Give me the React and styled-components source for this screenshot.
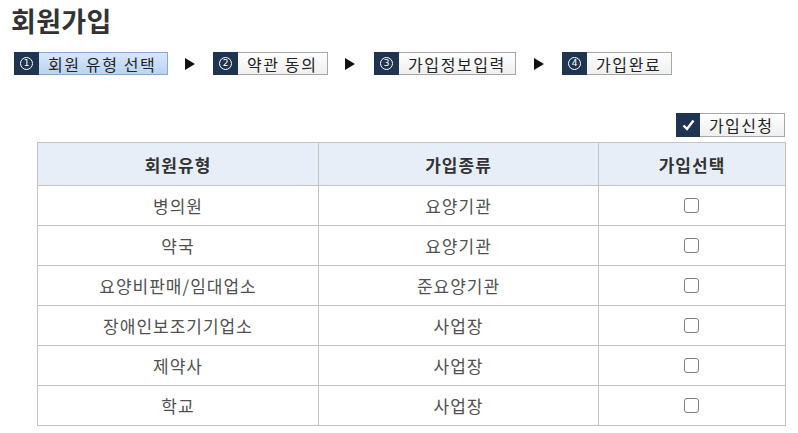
import React from "react";
import styled, { createGlobalStyle } from "styled-components";

const GlobalStyle = createGlobalStyle`
  html, body {
    margin: 0;
    padding: 0;
    background: #ffffff;
  }
  body {
    font-family: "Noto Sans CJK KR", "Noto Sans", sans-serif;
    color: #444;
  }
`;

const Page = styled.div`
  width: 798px;
  height: 433px;
  overflow: hidden;
  padding: 3px 0 0 11px;
  box-sizing: border-box;
`;

const Title = styled.h1`
  margin: 0;
  font-size: 27px;
  font-weight: 700;
  color: #333;
  line-height: 36px;
  letter-spacing: 0.3px;
`;

const Steps = styled.div`
  display: flex;
  align-items: center;
  margin: 13px 0 0 3px;
  height: 23px;
`;

const Step = styled.div`
  display: flex;
  height: 23px;
  box-sizing: border-box;
  border: 1px solid ${(p) => (p.$active ? "#8aa9cf" : "#a8a8a8")};
  border-left: none;
`;

const StepNum = styled.span`
  width: 25px;
  background: #1e3450;
  display: flex;
  align-items: center;
  justify-content: center;
  margin: -1px 0;
`;

const Circle = styled.span`
  width: 11px;
  height: 11px;
  border: 1.2px solid #fff;
  border-radius: 50%;
  color: #fff;
  font-family: "DejaVu Sans", sans-serif;
  font-size: 9px;
  line-height: 11px;
  text-align: center;
`;

const StepLabel = styled.span`
  display: flex;
  align-items: center;
  box-sizing: border-box;
  width: ${(p) => p.$w}px;
  padding-left: 9px;
  font-size: 16px;
  color: #222;
  letter-spacing: 1.6px;
  white-space: nowrap;
  background: ${(p) =>
    p.$active
      ? "linear-gradient(#d9e8fa, #b9d3f1)"
      : "linear-gradient(#ffffff, #efefef)"};
`;

const Arrow = styled.span`
  width: 0;
  height: 0;
  border-top: 6px solid transparent;
  border-bottom: 6px solid transparent;
  border-left: 10px solid #111;
  margin: 0 ${(p) => p.$right}px 0 ${(p) => p.$left}px;
`;

const ActionRow = styled.div`
  display: flex;
  justify-content: flex-end;
  width: 774px;
  margin-top: 38px;
`;

const ApplyButton = styled.button`
  display: flex;
  height: 24px;
  padding: 0;
  box-sizing: border-box;
  border: 1px solid #a8a8a8;
  border-left: none;
  background: linear-gradient(#ffffff, #efefef);
  cursor: pointer;
  font-family: inherit;
`;

const ApplyIcon = styled.span`
  width: 24px;
  margin: -1px 0;
  background: #1e3450;
  display: flex;
  align-items: center;
  justify-content: center;
`;

const ApplyText = styled.span`
  display: flex;
  align-items: center;
  box-sizing: border-box;
  width: 84px;
  padding-left: 9px;
  font-size: 16px;
  letter-spacing: 1.4px;
  color: #222;
`;

const Table = styled.table`
  margin: 5px 0 0 26px;
  width: 748px;
  border-collapse: collapse;
  table-layout: fixed;
`;

const Th = styled.th`
  height: 42px;
  background: #e8eef7;
  border: 1px solid #c3c3c3;
  font-size: 17px;
  font-weight: 700;
  letter-spacing: 1px;
  color: #333;
  padding: 0;
`;

const Td = styled.td`
  height: 39px;
  border: 1px solid #c3c3c3;
  text-align: center;
  font-size: 17px;
  letter-spacing: 1px;
  color: #505050;
  padding: 0;
`;

const Check = styled.input.attrs({ type: "checkbox" })`
  appearance: none;
  display: block;
  width: 15px;
  height: 15px;
  margin: 0 auto;
  position: relative;
  left: -1px;
  border: 1px solid #808080;
  border-radius: 3px;
  background: #fff;
`;

const steps = [
  { n: "1", label: "회원 유형 선택", active: true, w: 128 },
  { n: "2", label: "약관 동의", w: 89 },
  { n: "3", label: "가입정보입력", w: 116 },
  { n: "4", label: "가입완료", w: 84 },
];

const arrowGaps = [
  [17, 18],
  [17, 19],
  [18, 18],
];

const rows = [
  ["병의원", "요양기관"],
  ["약국", "요양기관"],
  ["요양비판매/임대업소", "준요양기관"],
  ["장애인보조기기업소", "사업장"],
  ["제약사", "사업장"],
  ["학교", "사업장"],
];

export default function App() {
  return (
    <>
      <GlobalStyle />
      <Page>
        <Title>회원가입</Title>
        <Steps>
          {steps.map((s, i) => (
            <React.Fragment key={s.n}>
              <Step $active={s.active}>
                <StepNum>
                  <Circle>{s.n}</Circle>
                </StepNum>
                <StepLabel $active={s.active} $w={s.w}>
                  {s.label}
                </StepLabel>
              </Step>
              {i < arrowGaps.length && (
                <Arrow $left={arrowGaps[i][0]} $right={arrowGaps[i][1]} />
              )}
            </React.Fragment>
          ))}
        </Steps>
        <ActionRow>
          <ApplyButton>
            <ApplyIcon>
              <svg width="13" height="12" viewBox="0 0 13 12">
                <path
                  d="M1.5 6.5 L5 10 L11.5 1.5"
                  fill="none"
                  stroke="#fff"
                  strokeWidth="2.4"
                />
              </svg>
            </ApplyIcon>
            <ApplyText>가입신청</ApplyText>
          </ApplyButton>
        </ActionRow>
        <Table>
          <colgroup>
            <col style={{ width: 281 }} />
            <col style={{ width: 280 }} />
            <col style={{ width: 187 }} />
          </colgroup>
          <thead>
            <tr>
              <Th>회원유형</Th>
              <Th>가입종류</Th>
              <Th>가입선택</Th>
            </tr>
          </thead>
          <tbody>
            {rows.map((r) => (
              <tr key={r[0]}>
                <Td>{r[0]}</Td>
                <Td>{r[1]}</Td>
                <Td>
                  <Check />
                </Td>
              </tr>
            ))}
          </tbody>
        </Table>
      </Page>
    </>
  );
}
